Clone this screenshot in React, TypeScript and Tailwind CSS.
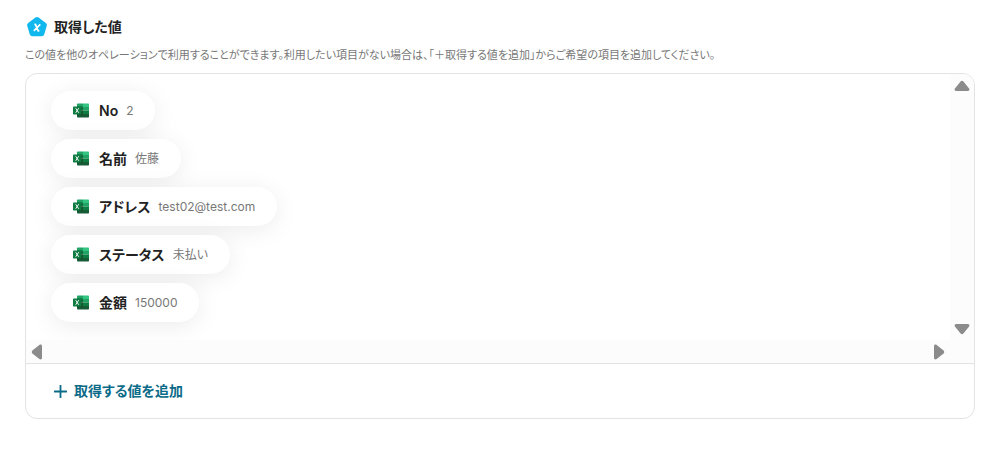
import { useRef } from "react";

type Field = {
  label: string;
  value: string;
};

const fields: Field[] = [
  { label: "No", value: "2" },
  { label: "名前", value: "佐藤" },
  { label: "アドレス", value: "test02@test.com" },
  { label: "ステータス", value: "未払い" },
  { label: "金額", value: "150000" },
];

function OutputIcon() {
  return (
    <svg width="22" height="22" viewBox="0 0 22 22" aria-hidden="true">
      <path
        d="M9.4 1.6a2.6 2.6 0 0 1 3.2 0l7.2 5.3a2.6 2.6 0 0 1 1 2.9l-2.6 8.6a2.6 2.6 0 0 1-2.5 1.8H6.3a2.6 2.6 0 0 1-2.5-1.8L1.2 9.8a2.6 2.6 0 0 1 1-2.9z"
        fill="#11b8ee"
      />
      <path d="M8.4 8.4h1l2.8 6.4h1.100M14.300 8.400L7.800 14.800" fill="none" stroke="#fff" strokeWidth="1.700" strokeLinejoin="round" />
    </svg>
  );
}

function ExcelIcon() {
  return (
    <svg width="16" height="15" viewBox="0 0 32 30" aria-hidden="true">
      <path d="M8 2.5A1.5 1.5 0 0 1 9.5 1H20v7H8z" fill="#21a366" />
      <path d="M20 1h10.5A1.5 1.5 0 0 1 32 2.5V8H20z" fill="#33c481" />
      <path d="M8 8h12v7H8z" fill="#107c41" />
      <path d="M20 8h12v7H20z" fill="#21a366" />
      <path d="M20 15h12v7H20z" fill="#107c41" />
      <path d="M8 15h12v7h12v5.5a1.5 1.5 0 0 1-1.5 1.5h-21A1.5 1.5 0 0 1 8 27.5z" fill="#185c37" />
      <path d="M8 6h9.5A1.5 1.5 0 0 1 19 7.5V23a1.5 1.5 0 0 1-1.5 1.5H8z" fill="#000" opacity=".2" />
      <rect y="7" width="17" height="16" rx="1.5" fill="#107c41" />
      <path d="M5.5 10.5l5.8 9M11.3 10.5l-5.8 9" stroke="#fff" strokeWidth="1.9" />
    </svg>
  );
}

function UpArrow() {
  return (
    <svg width="16" height="12" viewBox="0 0 16 12" aria-hidden="true">
      <path d="M6.6 1.400a2 2 0 0 1 2.800 0l5.500 6.900c1 1.500.4 2.700-1.200 2.700H2.300c-1.600 0-2.200-1.200-1.200-2.700z" fill="#8b8b8b" />
    </svg>
  );
}

function LeftArrow() {
  return (
    <svg width="12" height="16" viewBox="0 0 12 16" aria-hidden="true">
      <path d="M1.400 6.600a2 2 0 0 0 0 2.800l6.900 5.500c1.500 1 2.700.4 2.700-1.200V2.300c0-1.600-1.200-2.200-2.700-1.200z" fill="#8b8b8b" />
    </svg>
  );
}

export default function App() {
  const listRef = useRef<HTMLDivElement>(null);

  function scroll(left: number, top: number) {
    listRef.current?.scrollBy({ left, top });
  }

  return (
    <main className="bg-white pt-4 pr-[31px] pb-8 pl-[25px] font-['Inter','Noto_Sans_CJK_JP',sans-serif] text-[#222] [font-feature-settings:'palt']">
      <header>
        <div className="flex items-center gap-[6px] pl-px">
          <OutputIcon />
          <h1 className="text-sm leading-[22px] font-semibold">取得した値</h1>
        </div>
        <p className="mt-2 text-[11px] leading-[18px] text-[#777]">
          この値を他のオペレーションで利用することができます。利用したい項目がない場合は、「＋取得する値を追加」からご希望の項目を追加してください。
        </p>
      </header>

      <section className="mt-[9px] overflow-hidden rounded-xl border border-[#e3e3e3]">
        <div className="grid grid-cols-[1fr_24px] border-b border-[#e3e3e3]">
          <div ref={listRef} className="overflow-hidden px-[25px] pt-[17px] pb-[18px]">
            <ul className="flex flex-col items-start gap-[9px]">
              {fields.map((field) => (
                <li
                  key={field.label}
                  className="flex h-[39px] items-center rounded-full bg-white px-[22px] whitespace-nowrap shadow-[0_4px_24px_rgba(0,0,0,0.08)]"
                >
                  <ExcelIcon />
                  <span className="ml-[10px] text-sm font-semibold">{field.label}</span>
                  <span className="ml-2 text-xs text-[#777]">{field.value}</span>
                </li>
              ))}
            </ul>
          </div>
          <div className="flex flex-col items-center justify-between bg-[#fcfcfc] pt-[6px] pb-[5px]">
            <button type="button" aria-label="上へスクロール" onClick={() => scroll(0, -40)}>
              <UpArrow />
            </button>
            <button type="button" aria-label="下へスクロール" className="rotate-180" onClick={() => scroll(0, 40)}>
              <UpArrow />
            </button>
          </div>
          <div className="flex h-[23px] items-center justify-between bg-[#fcfcfc] px-[5px]">
            <button type="button" aria-label="左へスクロール" onClick={() => scroll(-40, 0)}>
              <LeftArrow />
            </button>
            <button type="button" aria-label="右へスクロール" className="rotate-180" onClick={() => scroll(40, 0)}>
              <LeftArrow />
            </button>
          </div>
          <div className="bg-[#fcfcfc]" />
        </div>

        <div className="flex h-[54px] items-center px-7">
          <button type="button" className="flex items-center gap-[7px] text-sm font-semibold text-[#0b6b88]">
            <svg width="13" height="13" viewBox="0 0 13 13" aria-hidden="true">
              <path d="M6.5.5v12M.5 6.5h12" stroke="currentColor" strokeWidth="1.8" strokeLinecap="round" />
            </svg>
            取得する値を追加
          </button>
        </div>
      </section>
    </main>
  );
}
